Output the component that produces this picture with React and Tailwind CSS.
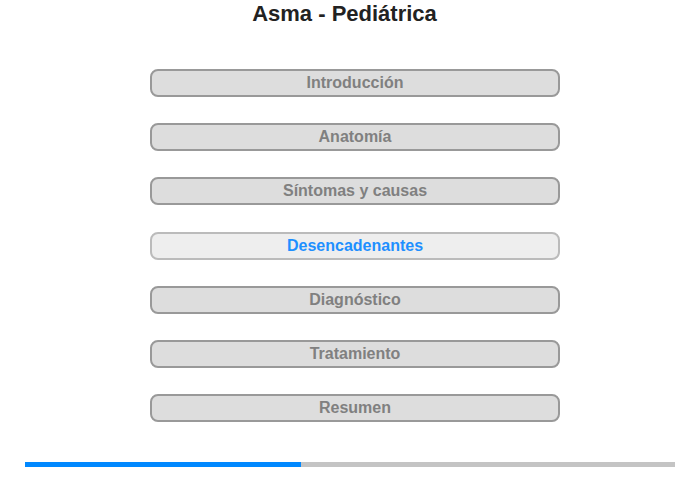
const sections = [
  "Introducción",
  "Anatomía",
  "Síntomas y causas",
  "Desencadenantes",
  "Diagnóstico",
  "Tratamiento",
  "Resumen",
];

const current = 3;

export default function App() {
  const progress = 42.5;

  return (
    <div className="h-[480px] w-[700px] bg-white font-['Liberation_Sans',Arial,sans-serif]">
      <h1 className="flex h-[27px] items-center justify-center pr-[11px] text-[22px] font-bold text-[#222]">
        Asma - Pediátrica
      </h1>

      <div className="mt-[42px] flex flex-col items-center gap-[26.2px] pl-[10px]">
        {sections.map((s, i) => (
          <button
            key={s}
            type="button"
            className={
              i === current
                ? "flex h-[28px] w-[410px] items-center justify-center rounded-[8px] border-2 border-[#bbb] bg-[#eee] text-[16px] font-bold text-[#1e90ff]"
                : "flex h-[28px] w-[410px] items-center justify-center rounded-[8px] border-2 border-[#999] bg-[#ddd] text-[16px] font-bold text-[#808080]"
            }
          >
            {s}
          </button>
        ))}
      </div>

      <div className="mx-[25px] mt-[40px] h-[5px] bg-[#c4c4c4]">
        <div className="h-full bg-[#0088ff]" style={{ width: `${progress}%` }} />
      </div>
    </div>
  );
}
